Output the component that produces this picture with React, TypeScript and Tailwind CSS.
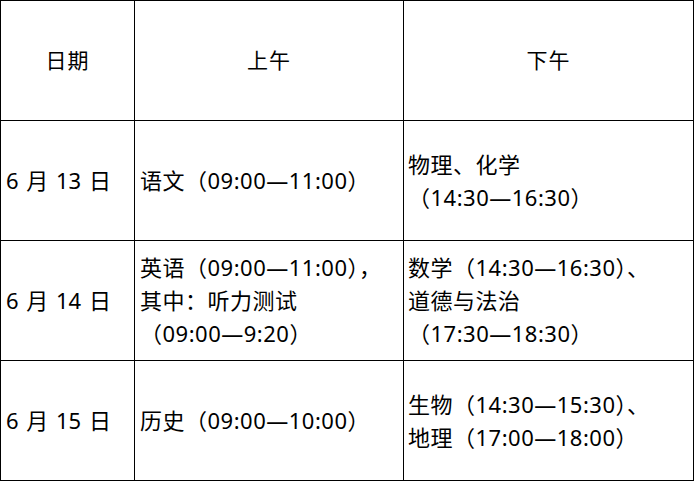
import React from 'react';

const cjk = { fontFamily: '"Noto Sans", "Noto Sans CJK SC", sans-serif' };

type Row = {
  date: string;
  am: string[];
  pm: string[];
};

const rows: Row[] = [
  { date: '6 月 13 日', am: ['语文（09:00—11:00）'], pm: ['物理、化学', '（14:30—16:30）'] },
  {
    date: '6 月 14 日',
    am: ['英语（09:00—11:00），', '其中：听力测试', '（09:00—9:20）'],
    pm: ['数学（14:30—16:30）、', '道德与法治', '（17:30—18:30）'],
  },
  { date: '6 月 15 日', am: ['历史（09:00—10:00）'], pm: ['生物（14:30—15:30）、', '地理（17:00—18:00）'] },
];

function Lines({ lines }: { lines: string[] }) {
  return (
    <div>
      {lines.map((l, i) => (
        <div key={i} className="whitespace-nowrap">
          {l}
        </div>
      ))}
    </div>
  );
}

export default function App() {
  const cell = 'border-r border-b border-black flex items-center';
  return (
    <div className="bg-white w-[694px] h-[481px] text-black text-[22px] leading-[33px]" style={cjk}>
      <div className="grid grid-cols-[134px_269px_290px] grid-rows-[120px_120px_120px_120px] border-l border-t border-black">
        {/* 表头 */}
        <div className={`${cell} justify-center text-[21px] tracking-[1px]`}>日期</div>
        <div className={`${cell} justify-center text-[21px] tracking-[1px]`}>上午</div>
        <div className={`${cell} justify-center text-[21px] tracking-[1px]`}>下午</div>

        {rows.map((r) => (
          <React.Fragment key={r.date}>
            <div className={`${cell} pl-[5px] [word-spacing:2px]`}>{r.date}</div>
            <div className={`${cell} pl-[5px] tracking-[0.5px]`}>
              <Lines lines={r.am} />
            </div>
            <div className={`${cell} pl-[4px] tracking-[0.5px]`}>
              <Lines lines={r.pm} />
            </div>
          </React.Fragment>
        ))}
      </div>
    </div>
  );
}
